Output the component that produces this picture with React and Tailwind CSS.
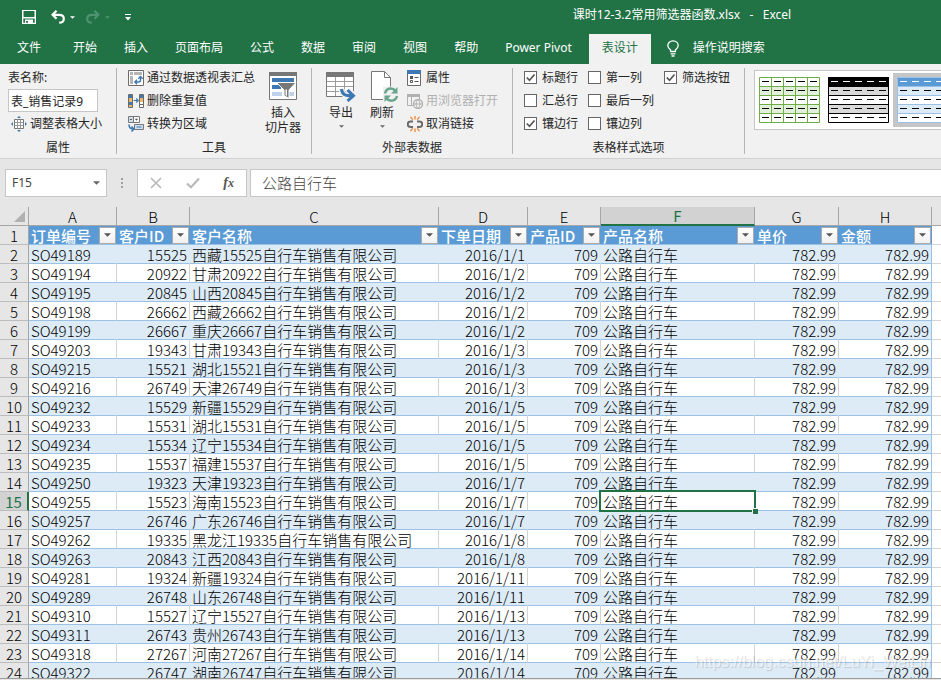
import { useState } from "react";

const TABS = [
  "开始",
  "插入",
  "页面布局",
  "公式",
  "数据",
  "审阅",
  "视图",
  "帮助",
  "Power Pivot",
];

const COLUMNS = [
  { letter: "A", title: "订单编号", width: "w-[88px]" },
  { letter: "B", title: "客户ID", width: "w-[73px]", right: true },
  { letter: "C", title: "客户名称", width: "w-[249px]" },
  { letter: "D", title: "下单日期", width: "w-[89px]", right: true },
  { letter: "E", title: "产品ID", width: "w-[73px]", right: true },
  { letter: "F", title: "产品名称", width: "w-[154px]" },
  { letter: "G", title: "单价", width: "w-[84px]", right: true },
  { letter: "H", title: "金额", width: "w-[93px]", right: true },
];

// order, customer id, region, date
const ORDERS = [
  ["SO49189", 15525, "西藏", "2016/1/1"],
  ["SO49194", 20922, "甘肃", "2016/1/2"],
  ["SO49195", 20845, "山西", "2016/1/2"],
  ["SO49198", 26662, "西藏", "2016/1/2"],
  ["SO49199", 26667, "重庆", "2016/1/2"],
  ["SO49203", 19343, "甘肃", "2016/1/3"],
  ["SO49215", 15521, "湖北", "2016/1/3"],
  ["SO49216", 26749, "天津", "2016/1/3"],
  ["SO49232", 15529, "新疆", "2016/1/5"],
  ["SO49233", 15531, "湖北", "2016/1/5"],
  ["SO49234", 15534, "辽宁", "2016/1/5"],
  ["SO49235", 15537, "福建", "2016/1/5"],
  ["SO49250", 19323, "天津", "2016/1/7"],
  ["SO49255", 15523, "海南", "2016/1/7"],
  ["SO49257", 26746, "广东", "2016/1/7"],
  ["SO49262", 19335, "黑龙江", "2016/1/8"],
  ["SO49263", 20843, "江西", "2016/1/8"],
  ["SO49281", 19324, "新疆", "2016/1/11"],
  ["SO49289", 26748, "山东", "2016/1/11"],
  ["SO49310", 15527, "辽宁", "2016/1/13"],
  ["SO49311", 26743, "贵州", "2016/1/13"],
  ["SO49318", 27267, "河南", "2016/1/14"],
  ["SO49322", 26747, "湖南", "2016/1/14"],
];

const ROWS = ORDERS.map(([order, customer, region, date]) => [
  order,
  customer,
  `${region}${customer}自行车销售有限公司`,
  date,
  709,
  "公路自行车",
  "782.99",
  "782.99",
]);

const ACTIVE_ROW = 15;
const ACTIVE_COL = "F";

function Caret({ className }) {
  return (
    <svg viewBox="0 0 8 4" className={className} fill="currentColor" aria-hidden="true">
      <path d="M0 0h8L4 4z" />
    </svg>
  );
}

function SaveIcon() {
  return (
    <svg viewBox="0 0 14 14" className="h-3.5 w-3.5" aria-hidden="true">
      <path
        fill="#fff"
        fillRule="evenodd"
        d="M0 0h14v14H0zM1.500 1v5.500L2 7h10l.5-.5V1zM1.300 8.500v4.200H3V9.500h8v3.200h1.700V8.500zM4 11v1.700h2V11z"
      />
    </svg>
  );
}

function UndoIcon() {
  return (
    <svg viewBox="0 0 14 14" className="h-3.5 w-3.5" fill="none" stroke="currentColor" strokeWidth="2.200" aria-hidden="true">
      <path d="M5.500.8 1.600 4.800l3.900 4M1.600 4.800h6.600c3 0 4.600 1.700 4.600 3.900s-1.600 4-4.600 4" />
    </svg>
  );
}

function BulbIcon() {
  return (
    <svg viewBox="0 0 12 17" className="h-[17px] w-3" fill="none" stroke="#fff" strokeWidth="1.300" aria-hidden="true">
      <path d="M3.600 11.500V10C2 8.700.8 7.600.8 5.600.8 2.800 3 .8 6 .8s5.200 2 5.200 4.800c0 2-1.200 3.100-2.800 4.400v1.500zM3.600 13.800h4.800M4.500 16h3" />
    </svg>
  );
}

function ResizeTableIcon() {
  return (
    <svg viewBox="0 0 16 16" className="h-4 w-4" aria-hidden="true">
      <path d="M3.500 3.500h9v9h-9z" fill="#fff" stroke="#777" />
      <path d="M3.500 6.500h9M3.500 9.500h9M6.500 3.500v9M9.500 3.500v9" stroke="#999" />
      <path d="M8 0l2 2H6zM8 16l2-2H6zM0 8l2-2v4zM16 8l-2-2v4z" fill="#3e78b3" />
    </svg>
  );
}

function PivotIcon() {
  return (
    <svg viewBox="0 0 16 16" className="h-4 w-4" aria-hidden="true">
      <path d="M.5.5h15v15H.5z" fill="#fff" stroke="#6b6b6b" />
      <path d="M2 2h3v3H2zM6 2h8v3H6zM2 6h3v8H2z" fill="#b5b5b5" />
      <path d="M7 12h3.500q2 0 2-2V7M9 9.800 6.800 12 9 14.200M10.300 8.800l2.200-2.200 2.200 2.200" fill="none" stroke="#3e78b3" strokeWidth="1.400" />
    </svg>
  );
}

function DuplicatesIcon() {
  return (
    <svg viewBox="0 0 16 16" className="h-4 w-4" aria-hidden="true">
      <path d="M.5 1.500h4v13h-4zM11.500 1.500h4v13h-4z" fill="#fff" stroke="#6b6b6b" />
      <path d="M1 2h3v3H1zM1 9h3v3H1zM12 2h3v3h-3z" fill="#3e78b3" />
      <path d="M1 5h3v4H1zM1 12h3v2H1zM12 5h3v4h-3z" fill="#eeb866" />
      <path d="M12 11.500h3" stroke="#6b6b6b" />
      <path d="M5.800 7.500h4M8.200 5.500l2 2-2 2" fill="none" stroke="#3e78b3" strokeWidth="1.200" />
    </svg>
  );
}

function ConvertIcon() {
  return (
    <svg viewBox="0 0 16 16" className="h-4 w-4" aria-hidden="true">
      <path d="M.5.5h11v6H.5z" fill="#fff" stroke="#777" />
      <path d="M1 1h4v5H1z" fill="#cfdff0" />
      <path d="M5.500.5v6" stroke="#777" />
      <path d="M2 3.500h2" stroke="#555" />
      <path d="M6.800 2.800h3.400L8.500 4.800z" fill="#555" />
      <path d="M6.500 8.500h9v5h-9z" fill="#cfdff0" stroke="#777" />
      <path d="M8.500 11h5" stroke="#3e78b3" />
      <path d="M1 8.500c0 3 1 4.500 4.500 4.500M3.500 10.500 6 13l-2.500 2.500" fill="none" stroke="#3e78b3" strokeWidth="1.500" />
    </svg>
  );
}

function SlicerIcon() {
  return (
    <svg viewBox="0 0 28 28" className="h-7 w-7" aria-hidden="true">
      <path d="M.5.5h27v27H.5z" fill="#fff" stroke="#777" />
      <path d="M0 0h28v4H0z" fill="#777" />
      <path d="M3 6h22v4H3zM3 13h9v4H3z" fill="#3e78b3" />
      <path d="M3 20h10v4H3zM20 20h5v4h-5z" fill="#bed3ea" />
      <path d="M7.500 10.500h19.500L20 18v8.500l-5-3V18z" fill="#777" stroke="#fff" />
      <path d="M16.500 17.500v5.500l1.500 1v-6.500z" fill="#fff" />
    </svg>
  );
}

function ExportIcon() {
  return (
    <svg viewBox="0 0 30 30" className="h-[30px] w-[30px]" aria-hidden="true">
      <path d="M.5.5h27v24H.5z" fill="#fff" stroke="#777" />
      <path d="M0 0h28v5H0z" fill="#777" />
      <path d="M1 9.500h26M1 14.500h26M1 19.500h26M9.500 5v19M18.500 5v19" stroke="#9c9c9c" />
      <path d="M15.500 17c.5 5.500 3.500 6.800 10 6.800M22 17.500l6 6.300-6 5.500" fill="none" stroke="#f1f1f1" strokeWidth="6" />
      <path d="M15.500 17c.5 5.500 3.500 6.800 11 6.800M21.500 18l6 5.800-6 5.200" fill="none" stroke="#3e78b3" strokeWidth="3" />
    </svg>
  );
}

function RefreshIcon() {
  return (
    <svg viewBox="0 0 28 31" className="h-[31px] w-7" aria-hidden="true">
      <path d="M1.500.5h13l6 6v22h-19z" fill="#fff" stroke="#777" />
      <path d="M14.500.5v6h6" fill="none" stroke="#777" />
      <path d="M13 15.500h15V31H13z" fill="#f1f1f1" />
      <path d="M15 22.500c.8-3.500 3.200-5 5.800-5 2.200 0 3.500.8 4.700 2.300M27 25c-.8 3.200-3.200 4.700-5.800 4.700-2.200 0-3.700-.8-4.900-2.300" fill="none" stroke="#69a58c" strokeWidth="2.500" />
      <path d="M27.500 16v6.500H21zM14.500 31v-6.500H21z" fill="#69a58c" />
    </svg>
  );
}

function PropertiesIcon() {
  return (
    <svg viewBox="0 0 14 16" className="h-4 w-3.5" aria-hidden="true">
      <path d="M.5.5h13v15H.5z" fill="#fff" stroke="#6b6b6b" />
      <path d="M0 0h14v4H0z" fill="#3e78b3" />
      <path d="M3 6h3v3H3z" fill="#555" />
      <path d="M3.500 10.500h2v2h-2zM7.500 7.500h4M7.500 11.500h4" fill="none" stroke="#555" />
    </svg>
  );
}

function BrowserIcon() {
  return (
    <svg viewBox="0 0 16 16" className="h-4 w-4" fill="none" stroke="#b0b0b0" aria-hidden="true">
      <path d="M.5 1.500h12v11H.5zM4.500 4v8" />
      <path d="M0 1h13v3H0z" fill="#b0b0b0" stroke="none" />
      <circle cx="11" cy="11" r="4.500" fill="#f1f1f1" strokeWidth="1.300" />
      <path d="M6.500 11h9M11 6.500c-2.500 2.500-2.500 6.500 0 9c2.500-2.500 2.500-6.500 0-9" />
    </svg>
  );
}

function UnlinkIcon() {
  return (
    <svg viewBox="0 0 16 16" className="h-4 w-4" fill="none" aria-hidden="true">
      <path d="M6 5.500H3.500a2.500 2.500 0 0 0 0 5.500H6M10 5.500h2.500a2.500 2.500 0 0 1 0 5.500H10" stroke="#6b6b6b" strokeWidth="2" />
      <path d="M8 0v3.500M3.500.8l2.200 2.800M12.500.8l-2.200 2.800M8 12.500V16M3.500 15.200l2.200-2.800M12.500 15.200l-2.200-2.800" stroke="#ea7d24" strokeWidth="1.200" />
    </svg>
  );
}

function RibbonGroup({ label, className, children }) {
  return (
    <section className={`flex shrink-0 flex-col ${className}`}>
      <div className="flex h-[72px] items-start">{children}</div>
      <div className="pt-0.5 text-center leading-4">{label}</div>
    </section>
  );
}

function Divider() {
  return <div className="mt-0.5 h-[86px] w-px shrink-0 bg-[#b4b4b4]" />;
}

function SmallCommand({ icon, children, disabled }) {
  return (
    <button
      type="button"
      disabled={disabled}
      className="flex h-[23px] items-center gap-[3px] whitespace-nowrap pt-px disabled:text-[#b0b0b0]"
    >
      {icon}
      {children}
    </button>
  );
}

function CheckOption({ label, initial = false }) {
  const [checked, setChecked] = useState(initial);

  return (
    <label className="flex h-[23px] items-center gap-[5px] whitespace-nowrap">
      <span className="grid h-[13px] w-[13px]">
        <input
          type="checkbox"
          checked={checked}
          onChange={(e) => setChecked(e.target.checked)}
          className="col-start-1 row-start-1 h-[13px] w-[13px] appearance-none border border-[#666] bg-white"
        />
        {checked ? (
          <svg
            viewBox="0 0 13 13"
            className="pointer-events-none col-start-1 row-start-1 h-[13px] w-[13px]"
            fill="none"
            stroke="#555"
            strokeWidth="1.700"
            aria-hidden="true"
          >
            <path d="M2.800 6.500 5.500 9.300 10.500 3.500" />
          </svg>
        ) : null}
      </span>
      {label}
    </label>
  );
}

function StyleThumb({ name, line, head, band, dash, vertical, selected }) {
  return (
    <button
      type="button"
      aria-label={name}
      className={`flex h-[54px] w-[69px] shrink-0 items-center justify-center ${selected ? "bg-[#c6c6c6]" : ""}`}
    >
      <svg viewBox="0 0 61 46" className="h-[46px] w-[61px]" aria-hidden="true">
        <path d="M0 0h61v46H0z" fill="#fff" />
        <path d="M0 0h61v9H0z" fill={head} />
        <path d="M0 9h61v9H0zM0 27h61v9H0z" fill={band} />
        <path d="M.5.5h60v45H.5zM0 9.500h61M0 18.500h61M0 27.500h61M0 36.500h61" fill="none" stroke={line} />
        {vertical ? (
          <path d="M12.500 0v46M24.500 0v46M36.500 0v46M48.500 0v46" stroke={line} />
        ) : null}
        <path d="M3 4.500h7m5 0h7m5 0h7m5 0h7m5 0h7" stroke={dash} />
        <path
          d="M3 13.500h7m5 0h7m5 0h7m5 0h7m5 0h7M3 22.500h7m5 0h7m5 0h7m5 0h7m5 0h7M3 31.500h7m5 0h7m5 0h7m5 0h7m5 0h7M3 40.500h7m5 0h7m5 0h7m5 0h7m5 0h7"
          stroke="#000"
        />
      </svg>
    </button>
  );
}

function TitleBar() {
  return (
    <header className="flex h-[34px] shrink-0 items-center bg-[#217346] pl-[22px] text-white">
      <button type="button" aria-label="保存">
        <SaveIcon />
      </button>
      <button type="button" aria-label="撤消" className="ml-[15px] flex items-center gap-[5px]">
        <UndoIcon />
        <Caret className="h-[3px] w-[5px]" />
      </button>
      <button type="button" aria-label="恢复" disabled className="ml-[11px] flex items-center gap-[5px] text-[#4f9270]">
        <span className="-scale-x-100">
          <UndoIcon />
        </span>
        <Caret className="h-[3px] w-[5px]" />
      </button>
      <button type="button" aria-label="自定义快速访问工具栏" className="ml-[15px]">
        <svg viewBox="0 0 6 7" className="h-[7px] w-1.5" fill="#fff" aria-hidden="true">
          <path d="M0 0h6v1H0zM0 3h6L3 6.500z" />
        </svg>
      </button>
      <h1 className="flex-1 whitespace-pre pb-1 pl-[308px] pr-4 text-center">
        课时12-3.2常用筛选器函数.xlsx{"   -   "}Excel
      </h1>
    </header>
  );
}

function RibbonTabs() {
  return (
    <nav className="flex h-[30px] shrink-0 items-stretch whitespace-nowrap bg-[#217346] pl-1 text-white">
      <button type="button" className="mr-1.5 px-[13px] pb-0.5">
        文件
      </button>
      {TABS.map((tab) => (
        <button key={tab} type="button" className="mr-px px-[13px] pb-0.5">
          {tab}
        </button>
      ))}
      <button type="button" className="ml-[3px] bg-[#f1f1f1] px-[13px] pb-0.5 text-[#217346]">
        表设计
      </button>
      <button type="button" className="flex items-center gap-3.5 px-4 pb-0.5">
        <BulbIcon />
        操作说明搜索
      </button>
    </nav>
  );
}

function Ribbon() {
  return (
    <div className="flex h-[95px] shrink-0 overflow-hidden border-b border-[#d0d0d0] bg-[#f1f1f1] pt-0.5 text-[#262626]">
      <RibbonGroup label="属性" className="w-[116px]">
        <div className="flex flex-col items-start pl-2">
          <label htmlFor="table-name" className="h-[23px] leading-6">
            表名称:
          </label>
          <input
            id="table-name"
            defaultValue="表_销售记录9"
            className="h-[23px] w-[90px] border border-[#c6c6c6] bg-white px-0.5"
          />
          <div className="pl-[3px]">
            <SmallCommand icon={<ResizeTableIcon />}>调整表格大小</SmallCommand>
          </div>
        </div>
      </RibbonGroup>
      <Divider />
      <RibbonGroup label="工具" className="w-[194px]">
        <div className="flex w-full justify-between pl-[11px] pr-2.5">
          <div className="flex flex-col items-start">
            <SmallCommand icon={<PivotIcon />}>通过数据透视表汇总</SmallCommand>
            <SmallCommand icon={<DuplicatesIcon />}>删除重复值</SmallCommand>
            <SmallCommand icon={<ConvertIcon />}>转换为区域</SmallCommand>
          </div>
          <button type="button" className="flex flex-col items-center pt-1.5 leading-[15px]">
            <SlicerIcon />
            <span className="pt-[5px]">
              插入
              <br />
              切片器
            </span>
          </button>
        </div>
      </RibbonGroup>
      <Divider />
      <RibbonGroup label="外部表数据" className="w-[200px]">
        <div className="flex pl-3.5">
          <button type="button" className="flex w-[30px] flex-col items-center pt-1.5 leading-[15px]">
            <ExportIcon />
            <span className="pt-[3px]">导出</span>
            <Caret className="mt-[5px] h-[3px] w-[5px] text-[#666]" />
          </button>
          <button type="button" className="ml-3.5 flex w-7 flex-col items-center pt-[5px] leading-[15px]">
            <RefreshIcon />
            <span className="pr-1 pt-[3px]">刷新</span>
            <Caret className="mr-1 mt-[5px] h-[3px] w-[5px] text-[#666]" />
          </button>
          <div className="flex flex-col items-start pl-[9px]">
            <SmallCommand
              icon={
                <span className="pr-0.5">
                  <PropertiesIcon />
                </span>
              }
            >
              属性
            </SmallCommand>
            <SmallCommand icon={<BrowserIcon />} disabled>
              用浏览器打开
            </SmallCommand>
            <SmallCommand icon={<UnlinkIcon />}>取消链接</SmallCommand>
          </div>
        </div>
      </RibbonGroup>
      <Divider />
      <RibbonGroup label="表格样式选项" className="w-[231px]">
        <div className="flex pl-[11px]">
          <div className="w-16">
            <CheckOption label="标题行" initial />
            <CheckOption label="汇总行" />
            <CheckOption label="镶边行" initial />
          </div>
          <div className="w-[76px]">
            <CheckOption label="第一列" />
            <CheckOption label="最后一列" />
            <CheckOption label="镶边列" />
          </div>
          <CheckOption label="筛选按钮" initial />
        </div>
      </RibbonGroup>
      <Divider />
      <div className="ml-[9px] mt-1 flex h-[60px] min-w-0 flex-1 items-center overflow-hidden border border-r-0 border-[#c6c6c6] bg-white">
        <StyleThumb name="表样式浅色 21" line="#70ad47" head="#fff" band="#e2efda" dash="#000" vertical />
        <StyleThumb name="表样式中等深浅 1" line="#000" head="#000" band="#d9d9d9" dash="#fff" />
        <StyleThumb name="表样式中等深浅 2" line="#9bc2e6" head="#5b9bd5" band="#ddebf7" dash="#fff" selected />
      </div>
    </div>
  );
}

function FormulaBar() {
  return (
    <div className="flex h-12 shrink-0 items-center pb-px pl-[5px] text-[#444]">
      <div className="flex h-7 w-[102px] items-center border border-[#c6c6c6] bg-white pr-1.5">
        <input aria-label="名称框" defaultValue="F15" className="min-w-0 flex-1 bg-transparent pl-1.5" />
        <button type="button" aria-label="名称列表">
          <Caret className="h-1 w-[7px] text-[#666]" />
        </button>
      </div>
      <svg viewBox="0 0 2 12" className="ml-3.5 h-3 w-0.5" fill="#a0a0a0" aria-hidden="true">
        <path d="M0 1h2v2H0zM0 5h2v2H0zM0 9h2v2H0z" />
      </svg>
      <div className="ml-3.5 flex h-7 w-[110px] items-center justify-between border border-[#c6c6c6] bg-white pl-3 pr-3">
        <button type="button" aria-label="取消">
          <svg viewBox="0 0 12 12" className="h-3 w-3" stroke="#b9b9b9" strokeWidth="1.700" aria-hidden="true">
            <path d="M1 1l10 10M11 1 1 11" />
          </svg>
        </button>
        <button type="button" aria-label="输入">
          <svg viewBox="0 0 14 12" className="h-3 w-3.5" fill="none" stroke="#b9b9b9" strokeWidth="2.200" aria-hidden="true">
            <path d="M1 6.500 5 10.300 13 1.500" />
          </svg>
        </button>
        <button
          type="button"
          aria-label="插入函数"
          className="font-['Liberation_Serif',serif] text-sm font-bold italic leading-5 text-[#555]"
        >
          f<span className="text-xs">x</span>
        </button>
      </div>
      <input
        aria-label="编辑栏"
        defaultValue="公路自行车"
        className="ml-[3px] h-7 min-w-0 flex-1 border border-r-0 border-[#c6c6c6] bg-white pl-[11px] font-['Noto_Sans_CJK_SC',sans-serif] text-[15px] font-light"
      />
    </div>
  );
}

function ColumnHeads() {
  return (
    <tr>
      <th className="h-[19px] border-b border-r border-[#a6a6a6] p-0">
        <svg viewBox="0 0 11 11" className="ml-[14px] h-[11px] w-[11px]" fill="#b1b1b1" aria-hidden="true">
          <path d="M11 0v11H0z" />
        </svg>
      </th>
      {COLUMNS.map(({ letter }) => (
        <th
          key={letter}
          scope="col"
          className={`h-[19px] border-r border-r-[#a6a6a6] p-0 align-bottom leading-4 ${
            letter === ACTIVE_COL
              ? "border-b-2 border-b-[#217346] bg-[#d2d2d2] font-normal text-[#217346]"
              : "border-b border-b-[#a6a6a6] font-light"
          }`}
        >
          {letter}
        </th>
      ))}
      <th className="h-[19px] border-b border-[#a6a6a6] p-0" />
    </tr>
  );
}

function RowHead({ number }) {
  return (
    <th
      scope="row"
      className={`h-[19px] border-b border-b-[#bdbdbd] p-0 pt-0.5 leading-4 ${
        number === ACTIVE_ROW
          ? "border-r-2 border-r-[#217346] bg-[#d2d2d2] font-normal text-[#217346]"
          : "border-r border-r-[#a6a6a6] bg-[#e6e6e6] font-light"
      }`}
    >
      {number}
    </th>
  );
}

function Sheet() {
  return (
    <main className="relative min-h-0 flex-1 overflow-hidden border-b border-[#9b9b9b]">
      <table className="w-full table-fixed border-separate border-spacing-0 whitespace-nowrap font-['Noto_Sans_CJK_SC',sans-serif] text-[15px] font-light text-black">
        <colgroup>
          <col className="w-[29px]" />
          {COLUMNS.map(({ letter, width }) => (
            <col key={letter} className={width} />
          ))}
          <col />
        </colgroup>
        <thead>
          <ColumnHeads />
        </thead>
        <tbody>
          <tr>
            <RowHead number={1} />
            {COLUMNS.map(({ letter, title }) => (
              <td
                key={letter}
                className="h-[19px] border-b border-[#9bc2e6] bg-[#5b9bd5] p-0 pl-[2px] pr-px font-medium leading-4 text-white"
              >
                <div className="flex h-[18px] items-center justify-between">
                  <span className="pt-0.5">{title}</span>
                  <button
                    type="button"
                    aria-label={`筛选${title}`}
                    className="flex h-[17px] w-[17px] shrink-0 items-center justify-center border border-[#ababab] bg-linear-to-b from-white to-[#f0f0f0]"
                  >
                    <Caret className="h-1 w-[7px] text-[#555]" />
                  </button>
                </div>
              </td>
            ))}
            <td className="border-b border-[#d4d4d4] bg-white p-0" />
          </tr>
          {ROWS.map((row, i) => {
            const number = i + 2;
            const banded = i % 2 === 0;

            return (
              <tr key={row[0]} className={banded ? "bg-[#ddebf7]" : "bg-white"}>
                <RowHead number={number} />
                {row.map((value, c) => {
                  const { letter, right } = COLUMNS[c];
                  const active = number === ACTIVE_ROW && letter === ACTIVE_COL;

                  return (
                    <td
                      key={letter}
                      className={`h-[19px] border-b border-r border-b-[#9bc2e6] px-0.5 pb-0 pt-0.5 leading-4 ${
                        right ? "text-right" : "text-left"
                      } ${
                        letter === "H"
                          ? "border-r-[#9bc2e6]"
                          : banded
                            ? "border-r-[#ddebf7]"
                            : "border-r-[#d4d4d4]"
                      } ${active ? "relative" : ""}`}
                    >
                      {value}
                      {active ? (
                        <span className="pointer-events-none absolute -inset-0.5 border-2 border-[#217346]">
                          <span className="absolute -bottom-1 -right-1 h-1.5 w-1.5 border-l border-t border-white bg-[#217346]" />
                        </span>
                      ) : null}
                    </td>
                  );
                })}
                <td className="border-b border-[#d4d4d4] bg-white p-0" />
              </tr>
            );
          })}
        </tbody>
      </table>
      <p className="pointer-events-none absolute bottom-1.5 right-2.5 font-['Liberation_Sans',sans-serif] text-base leading-5 text-white/60 [text-shadow:1px_1px_1px_rgba(0,0,0,0.15)]">
        https://blog.csdn.net/LuYi_WeiLin
      </p>
    </main>
  );
}

export default function App() {
  return (
    <div className="flex h-screen flex-col overflow-hidden bg-[#e6e6e6] pb-px font-['Noto_Sans','Noto_Sans_CJK_SC',sans-serif] text-xs">
      <TitleBar />
      <RibbonTabs />
      <Ribbon />
      <FormulaBar />
      <Sheet />
    </div>
  );
}
